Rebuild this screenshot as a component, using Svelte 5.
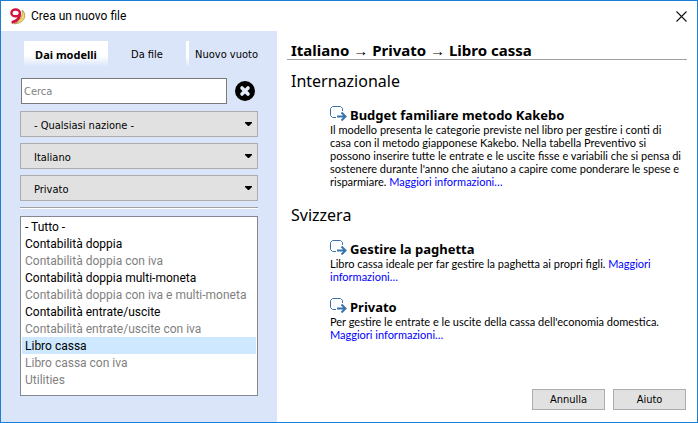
<script>
  let tab = $state('modelli');
  let search = $state('');
  let kind = $state('Libro cassa');

  const tabs = [
    { id: 'modelli', label: 'Dai modelli' },
    { id: 'file', label: 'Da file' },
    { id: 'vuoto', label: 'Nuovo vuoto' }
  ];

  const filters = [
    { name: 'Nazione', options: [' - Qualsiasi nazione -', 'Internazionale', 'Svizzera'] },
    { name: 'Lingua', options: ['Italiano', 'Deutsch', 'English'] },
    { name: 'Settore', options: ['Privato', 'Aziende', 'Associazioni'] }
  ];

  const kinds = [
    { label: '- Tutto -', on: true },
    { label: 'Contabilità doppia', on: true },
    { label: 'Contabilità doppia con iva', on: false },
    { label: 'Contabilità doppia multi-moneta', on: true },
    { label: 'Contabilità doppia con iva e multi-moneta', on: false },
    { label: 'Contabilità entrate/uscite', on: true },
    { label: 'Contabilità entrate/uscite con iva', on: false },
    { label: 'Libro cassa', on: true },
    { label: 'Libro cassa con iva', on: false },
    { label: 'Utilities', on: false }
  ];

  const groups = [
    {
      region: 'Internazionale',
      templates: [
        {
          title: 'Budget familiare metodo Kakebo',
          text: "Il modello presenta le categorie previste nel libro per gestire i conti di casa con il metodo giapponese Kakebo. Nella tabella Preventivo si possono inserire tutte le entrate e le uscite fisse e variabili che si pensa di sostenere durante l'anno che aiutano a capire come ponderare le spese e risparmiare."
        }
      ]
    },
    {
      region: 'Svizzera',
      templates: [
        {
          title: 'Gestire la paghetta',
          text: 'Libro cassa ideale per far gestire la paghetta ai propri figli.'
        },
        {
          title: 'Privato',
          text: "Per gestire le entrate e le uscite della cassa dell'economia domestica."
        }
      ]
    }
  ];
</script>

<div class="window">
  <header class="titlebar">
    <svg class="logo" width="17" height="17" viewBox="0 0 17 17" aria-hidden="true">
      <path d="M13.2 2C18 6.4 16.4 15.4 5 15.8C10.6 13.6 14 9 13.2 2Z" fill="#f3d96a" stroke="#a58f55" stroke-width=".8" />
      <path d="M10.6 4.6C11.2 9 8.8 12.6 3.8 14.2" fill="none" stroke="#d5133a" stroke-width="2.8" stroke-linecap="round" />
      <ellipse cx="6.6" cy="4.9" rx="4.2" ry="3.4" fill="#fff" stroke="#d5133a" stroke-width="2.4" />
    </svg>
    <span class="caption">Crea un nuovo file</span>
    <button class="close" aria-label="Chiudi">
      <svg width="11" height="11" viewBox="0 0 11 11"><path d="M.5 .5L10.5 10.5M10.5 .5L.5 10.5" stroke="#111" stroke-width="1.1" /></svg>
    </button>
  </header>

  <div class="body">
    <aside>
      <nav class="tabs">
        {#each tabs as t}
          <button class:active={tab === t.id} onclick={() => (tab = t.id)}>{t.label}</button>
        {/each}
      </nav>

      <div class="search">
        <input type="text" placeholder="Cerca" aria-label="Cerca" bind:value={search} />
        <button aria-label="Cancella ricerca" onclick={() => (search = '')}>
          <svg width="20" height="20" viewBox="0 0 20 20">
            <circle cx="10" cy="10" r="10" fill="#000" />
            <path d="M7 7L13 13M13 7L7 13" stroke="#e4ebfa" stroke-width="3.6" stroke-linecap="round" />
          </svg>
        </button>
      </div>

      <div class="filters">
        {#each filters as f}
          <div class="drop">
            <select aria-label={f.name}>
              {#each f.options as o}<option>{o}</option>{/each}
            </select>
            <svg width="7" height="4" viewBox="0 0 7 4" aria-hidden="true"><path d="M0 0H7V1L4 4H3L0 1Z" fill="#000" /></svg>
          </div>
        {/each}
      </div>

      <hr />

      <select class="kinds" size="10" aria-label="Tipo di contabilità" bind:value={kind}>
        {#each kinds as k}<option class:off={!k.on} value={k.label}>{k.label}</option>{/each}
      </select>
    </aside>

    <main>
      <h1>Italiano → Privato → Libro cassa</h1>
      <div class="groups">
        {#each groups as g}
          <section>
            <h2>{g.region}</h2>
            {#each g.templates as t}
              <article>
                <h3>
                  <svg width="17" height="15" viewBox="0 0 17 15" aria-hidden="true">
                    <path d="M6 11.5H2.5L.5 9.5V2.5L2.5 .5H10.5L12.5 2.5V5" fill="none" stroke="#3a74ad" />
                    <path d="M7 10.5H15M11.5 6.5L15.5 10.5L11.5 14.5" fill="none" stroke="#3a74ad" stroke-width="2" />
                  </svg>
                  <span>{t.title}</span>
                </h3>
                <p>{t.text} <a href="#info">Maggiori informazioni…</a></p>
              </article>
            {/each}
          </section>
        {/each}
      </div>
      <footer>
        <button>Annulla</button>
        <button>Aiuto</button>
      </footer>
    </main>
  </div>
</div>

<style>
  :global(body) {
    margin: 0;
    background: #fff;
  }
  .window,
  .window * {
    box-sizing: border-box;
  }
  .window {
    min-height: 100vh;
    display: flex;
    flex-direction: column;
    border: 1px solid #1a7fd4;
    background: #fff;
    color: #000;
    font: 11px/13px "DejaVu Sans Condensed", "DejaVu Sans", sans-serif;
  }
  button,
  input,
  select {
    margin: 0;
    padding: 0;
    border: 0;
    border-radius: 0;
    background: none;
    color: inherit;
    font: inherit;
    outline: 0;
  }
  .titlebar {
    display: flex;
    align-items: center;
    height: 30px;
    padding: 0 10px 0 8px;
  }
  .caption {
    flex: 1;
    padding-left: 5px;
    font: 12px/16px Roboto, sans-serif;
  }
  .close {
    display: flex;
  }
  .body {
    flex: 1;
    display: flex;
  }
  aside {
    flex: 0 0 276px;
    padding: 10px 19px 24px;
    background: #dae5f9;
  }
  .tabs {
    display: flex;
    height: 26px;
    margin-left: 4px;
  }
  .tabs button {
    flex: 1 0 auto;
    text-align: center;
  }
  .tabs button:first-child {
    flex: 0 0 84px;
  }
  .tabs button:last-child {
    flex: 0 0 72px;
    padding-left: 6px;
    border-left: 3px solid #fff;
    border-image: linear-gradient(#fff 60%, #dae5f9) 1;
  }
  .tabs .active {
    background: linear-gradient(#fff 55%, #dae5f9);
    font-family: "Noto Sans", sans-serif;
    font-weight: 700;
  }
  .search {
    display: flex;
    align-items: center;
    gap: 8px;
    margin: 11px 3px 7px 1px;
  }
  .search input {
    flex: 1;
    min-width: 0;
    height: 26px;
    padding: 0 2px;
    border: 1px solid #7a7a7a;
    background: #fff;
  }
  .search input::placeholder {
    color: #7f7f7f;
    opacity: 1;
  }
  .search button {
    display: flex;
  }
  .filters {
    display: grid;
    gap: 6px;
  }
  .drop {
    display: grid;
    align-items: center;
  }
  .drop select,
  .drop svg {
    grid-area: 1 / 1;
  }
  .drop select {
    appearance: none;
    height: 26px;
    padding: 2px 20px 0 13px;
    border: 1px solid #adadad;
    background: #e1e1e1;
  }
  .drop svg {
    justify-self: end;
    margin-right: 6px;
    pointer-events: none;
  }
  hr {
    height: 2px;
    margin: 6px 0 7px;
    border: 0;
    border-top: 1px solid #a0a0a0;
    background: #fff;
  }
  .kinds {
    display: block;
    width: 100%;
    height: 180px;
    padding: 1px;
    border: 1px solid #828790;
    background: #fff;
    font: 12px/15px Roboto, sans-serif;
    overflow: hidden;
  }
  .kinds option {
    height: 17px;
    min-height: 17px;
    padding: 2px 3px 0;
    line-height: 15px;
    color: #000;
  }
  .kinds .off {
    color: #7f7f7f;
  }
  .kinds option:checked {
    background: #cde8ff linear-gradient(#cde8ff, #cde8ff);
    color: #000;
  }
  main {
    flex: 1;
    display: flex;
    flex-direction: column;
    min-width: 0;
    padding: 10px 10px 12px;
  }
  h1,
  h2,
  h3,
  p {
    margin: 0;
  }
  h1,
  h2,
  h3 {
    font-family: "Noto Sans", "Liberation Sans", sans-serif;
  }
  h1 {
    padding: 0 4px;
    border-bottom: 1px solid #a0a0a0;
    font-size: 15px;
    line-height: 18px;
  }
  .groups {
    flex: 1;
    padding: 11px 4px 0;
  }
  h2 {
    margin-bottom: 15px;
    font-size: 16px;
    font-weight: 400;
    line-height: 20px;
  }
  article {
    margin: 0 0 15px 39px;
  }
  section {
    margin-bottom: 17px;
  }
  h3 {
    display: flex;
    gap: 3px;
    height: 17px;
    font-size: 13px;
    line-height: 18px;
  }
  p {
    font-family: Lato, sans-serif;
  }
  a {
    color: #00f;
    text-decoration: none;
  }
  footer {
    display: flex;
    justify-content: flex-end;
    gap: 8px;
    padding-right: 1px;
  }
  footer button {
    width: 73px;
    height: 21px;
    border: 1px solid #adadad;
    background: #e1e1e1;
  }
</style>
